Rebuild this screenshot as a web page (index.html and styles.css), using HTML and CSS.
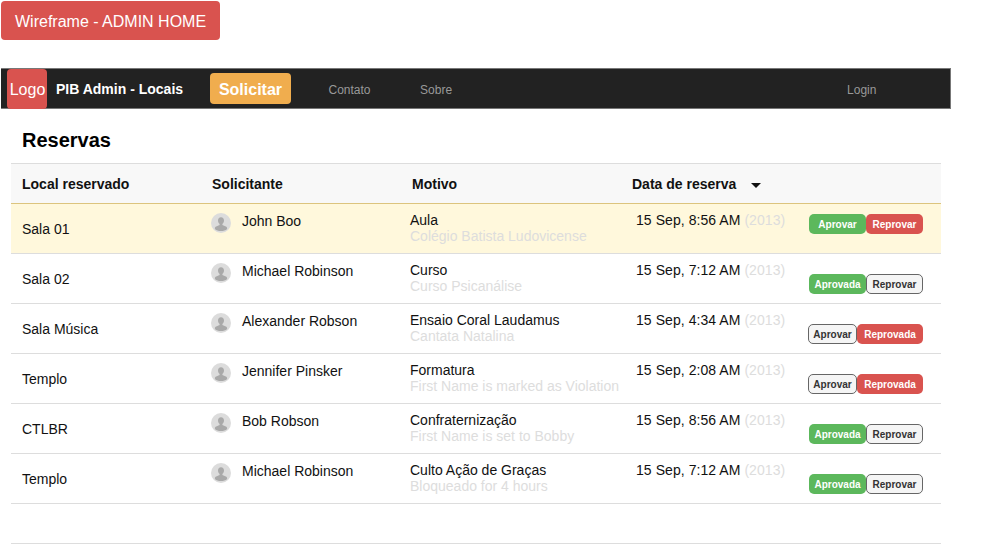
FILE: index.html
```html
<!DOCTYPE html>
<html lang="pt">
<head>
<meta charset="utf-8">
<title>Wireframe - ADMIN HOME</title>
<link rel="stylesheet" href="styles.css">
</head>
<body>
<a class="wire-btn">Wireframe - ADMIN HOME</a>
<nav class="nav">
  <div class="logo">Logo</div>
  <div class="brand">PIB Admin - Locais</div>
  <a class="solicitar">Solicitar</a>
  <a class="link link-contato">Contato</a>
  <a class="link link-sobre">Sobre</a>
  <a class="link link-login">Login</a>
</nav>
<main class="content">
  <h1 class="title">Reservas</h1>
  <div class="head">
    <div class="hc hc-local">Local reservado</div>
    <div class="hc hc-sol">Solicitante</div>
    <div class="hc hc-mot">Motivo</div>
    <div class="hc hc-data">Data de reserva<span class="caret"></span></div>
  </div>

  <div class="row row-active">
    <div class="local">Sala 01</div>
    <div class="person"><svg class="avatar" viewBox="0 0 20 20"><circle cx="10" cy="10" r="10" fill="#dcdcdc"/><path d="M10 4.2c-1.9 0-3 1.4-3 3.3 0 1.4.6 2.7 1.6 3.4v1.2l-3.4 1.5c-.9.4-1.3.9-1.3 1.7v.6c1.400 1.300 3.600 2.100 6.100 2.100s4.700-.8 6.100-2.100v-.6c0-.8-.4-1.300-1.300-1.700l-3.400-1.500v-1.200c1-.7 1.600-2 1.600-3.400 0-1.900-1.100-3.300-3-3.300z" fill="#a9a9a9"/></svg><span>John Boo</span></div>
    <div class="motivo"><div>Aula</div><div class="muted">Colégio Batista Ludovicense</div></div>
    <div class="date">15 Sep, 8:56 AM <span class="muted">(2013)</span></div>
    <div class="actions actions-top"><a class="btn btn-green w-aprovar-wide">Aprovar</a><a class="btn btn-red w-reprovar">Reprovar</a></div>
  </div>

  <div class="row">
    <div class="local">Sala 02</div>
    <div class="person"><svg class="avatar" viewBox="0 0 20 20"><circle cx="10" cy="10" r="10" fill="#dcdcdc"/><path d="M10 4.2c-1.9 0-3 1.4-3 3.3 0 1.4.6 2.7 1.6 3.4v1.2l-3.4 1.5c-.9.4-1.3.9-1.3 1.7v.6c1.400 1.300 3.600 2.100 6.100 2.100s4.700-.8 6.100-2.100v-.6c0-.8-.4-1.300-1.300-1.700l-3.400-1.500v-1.200c1-.7 1.600-2 1.600-3.400 0-1.900-1.100-3.300-3-3.300z" fill="#a9a9a9"/></svg><span>Michael Robinson</span></div>
    <div class="motivo"><div>Curso</div><div class="muted">Curso Psicanálise</div></div>
    <div class="date">15 Sep, 7:12 AM <span class="muted">(2013)</span></div>
    <div class="actions"><a class="btn btn-green w-aprovada">Aprovada</a><a class="btn btn-plain w-reprovar">Reprovar</a></div>
  </div>

  <div class="row">
    <div class="local">Sala Música</div>
    <div class="person"><svg class="avatar" viewBox="0 0 20 20"><circle cx="10" cy="10" r="10" fill="#dcdcdc"/><path d="M10 4.2c-1.9 0-3 1.4-3 3.3 0 1.4.6 2.7 1.6 3.4v1.2l-3.4 1.5c-.9.4-1.3.9-1.3 1.7v.6c1.400 1.300 3.600 2.100 6.100 2.100s4.700-.8 6.100-2.100v-.6c0-.8-.4-1.300-1.300-1.700l-3.400-1.500v-1.200c1-.7 1.600-2 1.600-3.400 0-1.900-1.100-3.300-3-3.300z" fill="#a9a9a9"/></svg><span>Alexander Robson</span></div>
    <div class="motivo"><div>Ensaio Coral Laudamus</div><div class="muted">Cantata Natalina</div></div>
    <div class="date">15 Sep, 4:34 AM <span class="muted">(2013)</span></div>
    <div class="actions"><a class="btn btn-plain w-aprovar">Aprovar</a><a class="btn btn-red w-reprovada">Reprovada</a></div>
  </div>

  <div class="row">
    <div class="local">Templo</div>
    <div class="person"><svg class="avatar" viewBox="0 0 20 20"><circle cx="10" cy="10" r="10" fill="#dcdcdc"/><path d="M10 4.2c-1.9 0-3 1.4-3 3.3 0 1.4.6 2.7 1.6 3.4v1.2l-3.4 1.5c-.9.4-1.3.9-1.3 1.7v.6c1.400 1.300 3.600 2.100 6.100 2.100s4.700-.8 6.100-2.100v-.6c0-.8-.4-1.300-1.300-1.700l-3.400-1.500v-1.200c1-.7 1.600-2 1.600-3.400 0-1.900-1.100-3.300-3-3.300z" fill="#a9a9a9"/></svg><span>Jennifer Pinsker</span></div>
    <div class="motivo"><div>Formatura</div><div class="muted">First Name is marked as Violation</div></div>
    <div class="date">15 Sep, 2:08 AM <span class="muted">(2013)</span></div>
    <div class="actions"><a class="btn btn-plain w-aprovar">Aprovar</a><a class="btn btn-red w-reprovada">Reprovada</a></div>
  </div>

  <div class="row">
    <div class="local">CTLBR</div>
    <div class="person"><svg class="avatar" viewBox="0 0 20 20"><circle cx="10" cy="10" r="10" fill="#dcdcdc"/><path d="M10 4.2c-1.9 0-3 1.4-3 3.3 0 1.4.6 2.7 1.6 3.4v1.2l-3.4 1.5c-.9.4-1.3.9-1.3 1.7v.6c1.400 1.300 3.600 2.100 6.100 2.100s4.700-.8 6.100-2.100v-.6c0-.8-.4-1.300-1.300-1.700l-3.400-1.500v-1.200c1-.7 1.600-2 1.600-3.400 0-1.900-1.100-3.300-3-3.300z" fill="#a9a9a9"/></svg><span>Bob Robson</span></div>
    <div class="motivo"><div>Confraternização</div><div class="muted">First Name is set to Bobby</div></div>
    <div class="date">15 Sep, 8:56 AM <span class="muted">(2013)</span></div>
    <div class="actions"><a class="btn btn-green w-aprovada">Aprovada</a><a class="btn btn-plain w-reprovar">Reprovar</a></div>
  </div>

  <div class="row">
    <div class="local">Templo</div>
    <div class="person"><svg class="avatar" viewBox="0 0 20 20"><circle cx="10" cy="10" r="10" fill="#dcdcdc"/><path d="M10 4.2c-1.9 0-3 1.4-3 3.3 0 1.4.6 2.7 1.6 3.4v1.2l-3.4 1.5c-.9.4-1.3.9-1.3 1.7v.6c1.400 1.300 3.600 2.100 6.100 2.100s4.700-.8 6.100-2.100v-.6c0-.8-.4-1.300-1.300-1.700l-3.400-1.500v-1.200c1-.7 1.600-2 1.600-3.400 0-1.900-1.100-3.300-3-3.300z" fill="#a9a9a9"/></svg><span>Michael Robinson</span></div>
    <div class="motivo"><div>Culto Ação de Graças</div><div class="muted">Bloqueado for 4 hours</div></div>
    <div class="date">15 Sep, 7:12 AM <span class="muted">(2013)</span></div>
    <div class="actions"><a class="btn btn-green w-aprovada">Aprovada</a><a class="btn btn-plain w-reprovar">Reprovar</a></div>
  </div>

  <div class="row-empty"></div>
</main>
</body>
</html>
```

FILE: styles.css
```css
* { box-sizing: border-box; }
html, body { margin: 0; padding: 0; background: #fff; }
body {
  width: 991px;
  height: 544px;
  overflow: hidden;
  font-family: "Liberation Sans", Arial, sans-serif;
  font-size: 14px;
  color: #111;
}
.wire-btn {
  display: block;
  width: 219px;
  height: 39px;
  margin: 1px 0 0 1px;
  padding-left: 14px;
  background: #d9534f;
  border-radius: 4px;
  color: #fff;
  font-size: 16px;
  line-height: 41px;
}
.nav {
  display: flex;
  align-items: center;
  width: 950px;
  height: 41px;
  margin: 28px 0 0 1px;
  padding-left: 6px;
  background: #222;
  border-top: 1px solid #777;
  border-bottom: 1px solid #777;
  border-right: 1px solid #777;
}
.logo {
  width: 40px;
  height: 40px;
  margin-top: -1px;
  margin-bottom: -1px;
  padding-left: 1px;
  background: #d9534f;
  border-radius: 4px;
  color: #fff;
  font-size: 16px;
  line-height: 42px;
  text-align: center;
}
.brand {
  width: 145px;
  margin-left: 9px;
  color: #fff;
  font-size: 14px;
  font-weight: bold;
}
.solicitar {
  width: 81px;
  height: 31px;
  margin-left: 9px;
  background: #f0ad4e;
  border-radius: 4px;
  color: #fff;
  font-size: 16px;
  font-weight: bold;
  line-height: 33px;
  text-align: center;
}
.link { padding-top: 2px; color: #999; font-size: 12px; }
.link-contato { margin-left: 37.500px; }
.link-sobre { margin-left: 49.500px; }
.link-login { margin-left: 395px; }

.content { width: 941px; padding-left: 11px; }
.title {
  height: 54px;
  margin: 0;
  padding: 20px 0 0 11px;
  color: #000;
  font-size: 20px;
  font-weight: bold;
  line-height: 23px;
}
.head {
  display: grid;
  grid-template-columns: 201px 200px 220px 1fr;
  height: 41px;
  background: #f8f8f8;
  border-top: 1px solid #ddd;
  border-bottom: 1px solid #dcc47e;
  font-weight: bold;
  line-height: 41px;
}
.hc-local { padding-left: 11px; }
.caret {
  display: inline-block;
  margin-left: 15px;
  vertical-align: middle;
  border-top: 5px solid #111;
  border-left: 5px solid transparent;
  border-right: 5px solid transparent;
}
.row {
  display: grid;
  grid-template-columns: 200px 199px 226px 1fr auto;
  height: 50px;
  border-bottom: 1px solid #ddd;
  line-height: 16px;
}
.row-active { background: #fff8dc; }
.row-empty { height: 40px; border-bottom: 1px solid #ddd; }
.local { padding: 17px 0 0 11px; }
.person { display: flex; padding-top: 9px; }
.avatar { flex: none; width: 20px; height: 20px; margin-right: 11px; }
.motivo { padding-top: 8px; }
.date { padding-top: 8px; letter-spacing: 0.060px; }
.muted { color: #ddd; }
.actions { display: flex; align-items: flex-start; padding: 20px 18px 0 0; }
.actions-top { padding-top: 10px; }
.btn {
  display: block;
  height: 20px;
  border-radius: 5px;
  font-size: 10px;
  font-weight: bold;
  line-height: 22px;
  text-align: center;
}
.btn-green { background: #5cb85c; color: #fff; }
.btn-red { background: #d9534f; color: #fff; }
.btn-plain { background: #f5f5f5; border: 1px solid #666; color: #333; line-height: 20px; }
.w-aprovar-wide, .w-aprovada, .w-reprovar { width: 57px; }
.w-aprovar { width: 49px; }
.w-reprovada { width: 66px; }
```
